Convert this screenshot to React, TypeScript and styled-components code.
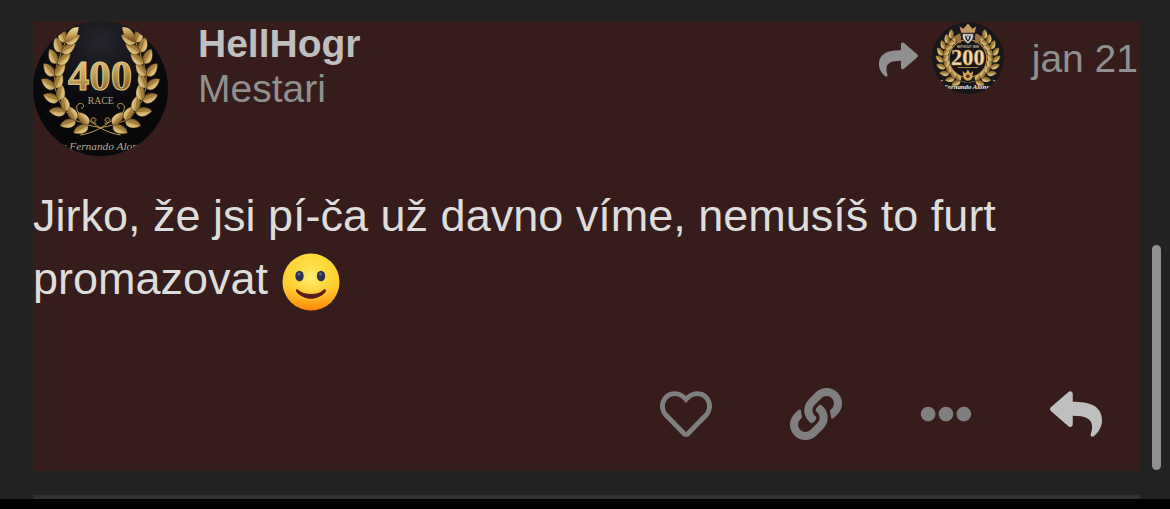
import React from "react";
import styled, { createGlobalStyle } from "styled-components";
import { FaEllipsisH, FaLink, FaRegHeart, FaReply, FaShare } from "react-icons/fa";

const GlobalStyle = createGlobalStyle`
  * { box-sizing: border-box; }
  body {
    margin: 0;
    background: #000;
    color: #dddddd;
    font-family: "Liberation Sans", Arial, sans-serif;
  }
`;

const Page = styled.main`
  position: relative;
  padding: 21px 30px 0 33px;
  background: #222222;
`;

const Post = styled.article`
  display: flex;
  flex-direction: column;
  background: #371c1c;
`;

const Header = styled.header`
  display: flex;
  align-items: flex-start;
`;

const AvatarLink = styled.a<{ $size: number }>`
  display: block;
  flex: none;
  width: ${(p) => p.$size}px;
  height: ${(p) => p.$size}px;
  border-radius: 50%;
  overflow: hidden;

  svg { display: block; width: 100%; height: 100%; }
`;

const Names = styled.div`
  display: flex;
  flex: 1;
  flex-direction: column;
  align-items: flex-start;
  margin-left: 30px;
  font-size: 39px;
  line-height: 45px;
`;

const UserName = styled.a`
  color: #bfbfbf;
  font-weight: bold;
  text-decoration: none;
`;

const UserTitle = styled.span`
  color: #909090;
`;

const PostInfo = styled.div`
  display: flex;
  align-items: center;
  padding: 1px 2px 0 0;
  color: #909090;
  font-size: 39px;
  line-height: 45px;
`;

const ReplyTo = styled.div`
  display: flex;
  align-items: center;
  gap: 14px;
  margin-right: 28px;

  > svg { display: block; margin-top: 3px; }
`;

const DateLink = styled.a`
  color: inherit;
  text-decoration: none;
`;

const Body = styled.p`
  margin: 28px 0 45px;
  font-size: 45px;
  line-height: 63px;
`;

const Emoji = styled.svg`
  width: 60px;
  height: 60px;
  vertical-align: -18px;
`;

const Actions = styled.nav`
  display: flex;
  justify-content: flex-end;
  margin-right: -1px;
`;

const ActionButton = styled.button<{ $bright?: boolean }>`
  display: flex;
  padding: 31px 39px;
  border: 0;
  background: transparent;
  color: ${(p) => (p.$bright ? "#bfbfbf" : "#7f7f7f")};
  font-size: 52px;
  cursor: pointer;

  svg { display: block; }
`;

const Divider = styled.hr`
  height: 4px;
  margin: 24px 0 0;
  border: 0;
  background: #313131;
`;

const ScrollThumb = styled.div`
  position: absolute;
  top: 245px;
  right: 9px;
  width: 9px;
  height: 225px;
  border-radius: 5px;
  background: #909090;
`;

type Point = [number, number];

const LEAF = "M0 0C-3 -19 22 -30 50 -12C40 9 14 14 0 0Z";

/* One side of a wreath: a stem with a leaf on each side of every joint. */
function Branch({ stem, scale, fill }: { stem: Point[]; scale: number; fill: string }) {
  const line = stem.map(([x, y]) => `${x},${y}`).join(" ");
  return (
    <g fill={fill} stroke="#2b1c08" strokeWidth="1">
      <polyline points={line} fill="none" stroke="#b98f45" strokeWidth="3" />
      {stem.slice(1).map(([x, y], i) => {
        const [px, py] = stem[i];
        const angle = (Math.atan2(y - py, x - px) * 180) / Math.PI;
        return (
          <g key={i} transform={`translate(${x} ${y}) rotate(${angle}) scale(${scale})`}>
            <path d={LEAF} transform="rotate(-28)" />
            <path d={LEAF} transform="scale(1 -1) rotate(-28)" />
            <path d="M3 -2Q22 -20 36 -30M3 2Q22 20 36 30" fill="none" stroke="#7b5824" strokeWidth="1.5" />
          </g>
        );
      })}
    </g>
  );
}

const STEM_400: Point[] = [
  [206, 321], [164, 312], [127, 298], [97, 271], [77, 237], [66, 200], [65, 163], [73, 127], [85, 93], [97, 64],
];

const STEM_200: Point[] = [
  [196, 341], [158, 331], [126, 315], [96, 288], [76, 256], [66, 221], [65, 185], [75, 151], [92, 120], [112, 94],
];

function GoldGradient({ id }: { id: string }) {
  return (
    <linearGradient id={id} x1="0" y1="0" x2="0.3" y2="1">
      <stop offset="0" stopColor="#f2e0a3" />
      <stop offset="0.5" stopColor="#cba65c" />
      <stop offset="1" stopColor="#7d5a26" />
    </linearGradient>
  );
}

function Avatar400() {
  return (
    <svg viewBox="0 0 405 405" role="img" aria-label="HellHogr">
      <defs>
        <GoldGradient id="gold400" />
        <radialGradient id="night400" cx="0.5" cy="0.15" r="0.7">
          <stop offset="0" stopColor="#24252c" />
          <stop offset="0.6" stopColor="#0c0c10" />
          <stop offset="1" stopColor="#08080a" />
        </radialGradient>
      </defs>
      <rect width="405" height="405" fill="url(#night400)" />
      <Branch stem={STEM_400} scale={0.95} fill="url(#gold400)" />
      <g transform="translate(405 0) scale(-1 1)">
        <Branch stem={STEM_400} scale={0.95} fill="url(#gold400)" />
      </g>
      <path d="M97 64C100 30 116 18 137 18C136 44 122 60 97 64ZM308 64C305 30 289 18 268 18C269 44 283 60 308 64Z" fill="url(#gold400)" />
      <g fill="none" stroke="#c39b52" strokeWidth="3">
        <path d="M142 342C178 337 208 320 235 299M263 342C227 337 197 320 170 299" />
        <path d="M168 305C138 286 120 258 138 248C154 243 156 263 144 261M237 305C267 286 285 258 267 248C251 243 249 263 261 261" />
        <path d="M190 307C166 304 174 285 186 292C194 298 185 304 182 299M215 307C239 304 231 285 219 292C211 298 220 304 223 299" />
      </g>
      <text
        x="201" y="207" textAnchor="middle" fill="url(#gold400)" stroke="#e3c987" strokeWidth="3"
        fontFamily='"Liberation Serif", serif' fontWeight="bold" fontSize="128"
      >400</text>
      <text x="203" y="249" textAnchor="middle" fill="#b8a27a" fontFamily='"Liberation Serif", serif' fontSize="29">RACE</text>
      <text
        x="200" y="387" textAnchor="middle" fill="#b9aa8c"
        fontFamily='"Liberation Serif", serif' fontStyle="italic" fontSize="34"
      >y Fernando Alon</text>
    </svg>
  );
}

function Avatar200() {
  return (
    <svg viewBox="0 0 405 405" role="img" aria-label="200">
      <defs>
        <GoldGradient id="gold200" />
      </defs>
      <rect width="405" height="405" fill="#191719" />
      <Branch stem={STEM_200} scale={1.05} fill="url(#gold200)" />
      <g transform="translate(405 0) scale(-1 1)">
        <Branch stem={STEM_200} scale={1.05} fill="url(#gold200)" />
      </g>
      <circle cx="202" cy="205" r="106" fill="#171518" stroke="#bd9150" strokeWidth="6" />
      <path d="M164 61L155 25L177 38L202 8L227 38L249 25L240 61Z" fill="#c79a62" />
      <path d="M160 65Q128 67 130 105Q148 124 164 117M244 65Q276 67 274 105Q256 124 240 117" fill="#9b713f" />
      <path d="M172 66H232V86Q228 108 202 122Q176 108 172 86Z" fill="#ddd8ce" stroke="#333" strokeWidth="4" />
      <path d="M184 74L196 82L202 72L208 82L220 74L214 98L202 113L190 98Z" fill="#27252a" />
      <path d="M196 80H209L205 100H199Z" fill="#ddd8ce" />
      <text
        x="202" y="144" textAnchor="middle" fill="#c8b790"
        fontFamily='"Liberation Sans", sans-serif' fontWeight="bold" fontSize="18"
      >WITHOUT WIN</text>
      <text
        x="202" y="240" textAnchor="middle" fill="#f0ddb0" stroke="#bc8e48" strokeWidth="3"
        fontFamily='"Liberation Serif", serif' fontWeight="bold" fontSize="126"
      >200</text>
      <path d="M145 256H259" stroke="#bd9150" strokeWidth="5" />
      <path d="M172 276L188 290L202 267L216 290L232 276L226 318Q202 343 178 318Z" fill="#d1a455" />
      <circle cx="202" cy="305" r="10" fill="#4b301a" />
      <path d="M28 327L45 335L62 327M343 327L360 335L377 327" fill="none" stroke="#ded6c3" strokeWidth="5" />
      <text
        x="202" y="376" textAnchor="middle" fill="#f2eee5"
        fontFamily='"Liberation Serif", serif' fontStyle="italic" fontWeight="bold" fontSize="38"
      >Fernando Alonso</text>
    </svg>
  );
}

function SlightSmile() {
  return (
    <Emoji viewBox="0 0 60 60" role="img" aria-label="slightly smiling face">
      <defs>
        <linearGradient id="face" x1="0" y1="0" x2="0" y2="1">
          <stop offset="0" stopColor="#fdd835" />
          <stop offset="0.55" stopColor="#fecf2c" />
          <stop offset="0.8" stopColor="#ffae1f" />
          <stop offset="1" stopColor="#ff850d" />
        </linearGradient>
        <radialGradient id="glow" cx="0.5" cy="0.42" r="0.46">
          <stop offset="0" stopColor="#fff07a" stopOpacity="0.95" />
          <stop offset="1" stopColor="#ffdf42" stopOpacity="0" />
        </radialGradient>
      </defs>
      <circle cx="30" cy="30" r="28.5" fill="url(#face)" />
      <circle cx="30" cy="30" r="28.5" fill="url(#glow)" />
      <ellipse cx="18.500" cy="24" rx="4.2" ry="5.3" fill="#293052" />
      <ellipse cx="40" cy="24" rx="4.2" ry="5.3" fill="#293052" />
      <ellipse cx="18" cy="22" rx="1.700" ry="1.500" fill="#596080" />
      <ellipse cx="39.500" cy="22" rx="1.700" ry="1.500" fill="#596080" />
      <path d="M16.500 37.500C20 40.500 25 42 30 42S40 40.500 43 37.500C44.500 36.500 45.500 38 44.500 40C37 49 23 49 15.500 40C14.500 38 15 36.500 16.500 37.500Z" fill="#591b1b" />
    </Emoji>
  );
}

export default function App() {
  return (
    <>
      <GlobalStyle />
      <Page>
        <Post>
          <Header>
            <AvatarLink href="#hellhogr" $size={135}>
              <Avatar400 />
            </AvatarLink>
            <Names>
              <UserName href="#hellhogr">HellHogr</UserName>
              <UserTitle>Mestari</UserTitle>
            </Names>
            <PostInfo>
              <ReplyTo>
                <FaShare aria-hidden="true" />
                <AvatarLink href="#parent" $size={72}>
                  <Avatar200 />
                </AvatarLink>
              </ReplyTo>
              <DateLink href="#post">jan 21</DateLink>
            </PostInfo>
          </Header>
          <Body>
            Jirko, že jsi pí-ča už davno víme, nemusíš to furt promazovat <SlightSmile />
          </Body>
          <Actions aria-label="Post actions">
            <ActionButton type="button" aria-label="Like"><FaRegHeart /></ActionButton>
            <ActionButton type="button" aria-label="Copy link"><FaLink /></ActionButton>
            <ActionButton type="button" aria-label="More"><FaEllipsisH /></ActionButton>
            <ActionButton type="button" aria-label="Reply" $bright><FaReply /></ActionButton>
          </Actions>
        </Post>
        <Divider />
        <ScrollThumb />
      </Page>
    </>
  );
}
